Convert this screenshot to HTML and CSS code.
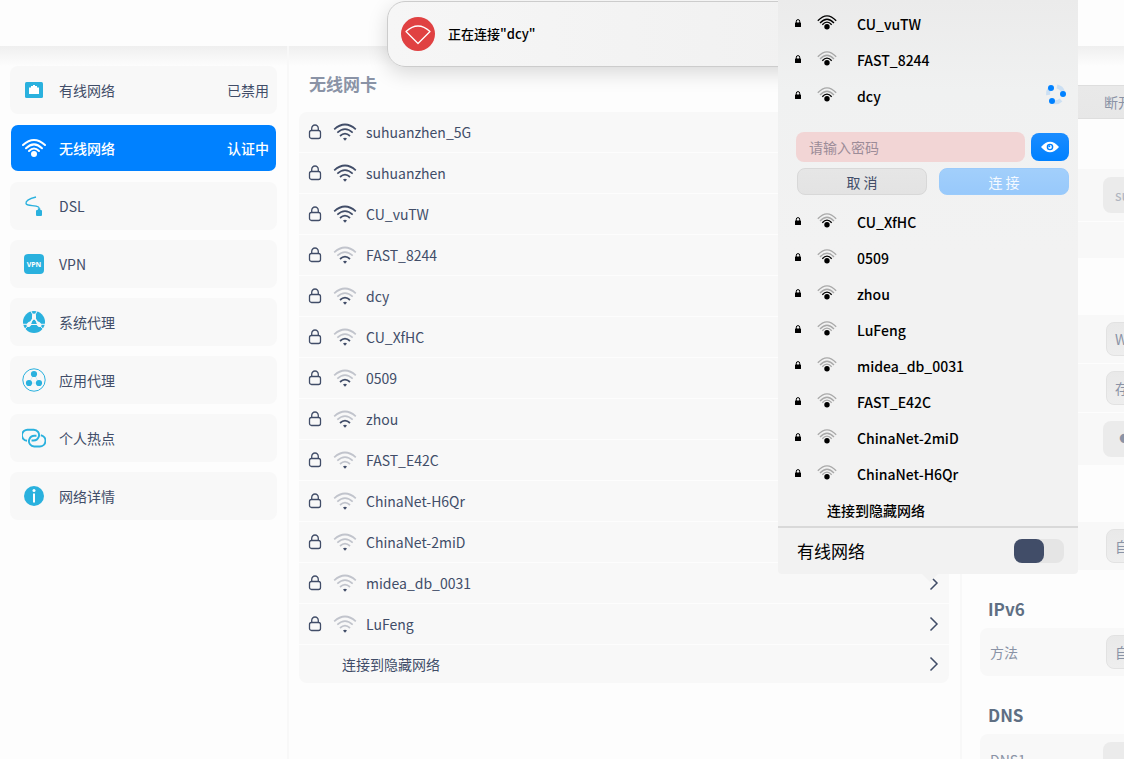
FILE: index.html
```html
<!DOCTYPE html>
<html lang="zh-CN">
<head>
    <meta charset="UTF-8">
    <meta name="viewport" content="width=device-width, initial-scale=1.0">
    <title>网络</title>
    <link rel="stylesheet" href="styles.css">
</head>
<body>
    <svg class="sprite" aria-hidden="true">
        <symbol id="lock" viewBox="0 0 14 16">
            <rect x="1.5" y="6.5" width="11" height="8" rx="2"/>
            <path d="M3.7 6.5V4.6a3.3 3.6 0 0 1 6.6 0v1.9"/>
        </symbol>
        <symbol id="lock-small" viewBox="0 0 6 8">
            <rect x="0" y="3.5" width="6" height="4.5" rx=".6" fill="#000"/>
            <path d="M1.3 4V2.2a1.7 1.6 0 0 1 3.4 0V4" fill="none" stroke="#000"/>
        </symbol>
        <symbol id="wifi" viewBox="0 0 24 18">
            <path class="w3" d="M1.2 6.3Q12-3.3 22.8 6.3"/>
            <path class="w2" d="M4.3 9.7Q12 2.6 19.7 9.7"/>
            <path class="w1" d="M7 13Q12 8.4 17 13"/>
            <path class="dot" d="M10 15.600Q12 14 14 15.600L12 17.800z"/>
        </symbol>
        <symbol id="wifi-tray" viewBox="0 0 20 15">
            <path class="w3" d="M.8 5.8Q10-4.2 19.2 5.8"/>
            <path class="w2" d="M3 8Q10 .5 17 8"/>
            <path class="w1" d="M5.3 9.8Q10 4.4 14.7 9.8"/>
            <circle class="dot" cx="10" cy="11.7" r="2.7"/>
        </symbol>
        <symbol id="chevron" viewBox="0 0 10 16">
            <path d="M1.5 1.5 8 8l-6.500 6.500"/>
        </symbol>
    </svg>

    <header class="titlebar"></header>

    <div class="layout">
        <nav class="sidebar">
            <a href="#" class="nav-item">
                <svg class="nav-icon" viewBox="0 0 24 24"><rect x="3" y="4" width="18" height="16" rx="1.500" fill="#2ab1de"/><path d="M7 16V9.500h2V8h2V7h2v1h2v1.500h2V16z" fill="#fff"/></svg>
                <span>有线网络</span>
                <span class="nav-state">已禁用</span>
            </a>
            <a href="#" class="nav-item active">
                <svg class="nav-icon" viewBox="0 0 24 24"><g fill="none" stroke="#fff" stroke-width="2" stroke-linecap="round"><path d="M1 9Q12-1 23 9"/><path d="M4 12.3Q12 4.5 20 12.3"/><path d="M7 15Q12 10 17 15"/></g><circle cx="12" cy="18" r="3" fill="#fff"/></svg>
                <span>无线网络</span>
                <span class="nav-state">认证中</span>
            </a>
            <a href="#" class="nav-item">
                <svg class="nav-icon" viewBox="0 0 24 24"><path d="M14 3C8 4.500 3.500 7 4 9.500c.6 2.800 9 1.500 12.500 3.500.8.500.8 1.500.8 3" fill="none" stroke="#2ab1de" stroke-width="1.300"/><path d="M14 17q0-1 1-1h.8v-1.500h2.600V16h.6q1 0 1 1v4q0 1-1 1h-4q-1 0-1-1z" fill="#2ab1de"/></svg>
                <span>DSL</span>
            </a>
            <a href="#" class="nav-item">
                <svg class="nav-icon" viewBox="0 0 24 24"><rect x="2" y="2" width="20" height="20" rx="4" fill="#2ab1de"/><text class="vpn-text" x="12" y="15" text-anchor="middle">VPN</text></svg>
                <span>VPN</span>
            </a>
            <a href="#" class="nav-item">
                <svg class="nav-icon" viewBox="0 0 24 24"><circle cx="12" cy="12" r="11" fill="#2ab1de"/><g fill="none" stroke="#f8f8f8" stroke-linecap="round"><path d="M12 5.500v2.500M8 13.500l-1.500 1.500M16 13.500l1.500 1.500" stroke-width="4"/><path d="M12 7 7 15M12 7l5 8M7 14.300h10" stroke-width="1.600"/><path d="M9 1.200 11 5M15 1.200 13 5M.8 14.300H6M23.200 14.300H18M3.500 18.500 6 15.500M20.500 18.500 18 15.500" stroke-width="1"/></g><path d="M12 9.500l3 4.500H9z" fill="#2ab1de"/></svg>
                <span>系统代理</span>
            </a>
            <a href="#" class="nav-item">
                <svg class="nav-icon" viewBox="0 0 24 24"><circle cx="12" cy="12" r="11.200" fill="none" stroke="#2ab1de"/><path d="M12 6l5 9H7z" fill="none" stroke="#c5e8f4" stroke-width=".8"/><g fill="#2ab1de"><circle cx="12" cy="6" r="3.100"/><circle cx="7" cy="15" r="3.100"/><circle cx="17" cy="15" r="3.100"/></g></svg>
                <span>应用代理</span>
            </a>
            <a href="#" class="nav-item">
                <svg class="nav-icon" viewBox="0 0 24 24"><g fill="none" stroke="#2ab1de" stroke-width="1.900"><path d="M5 14.800A5.300 5.300 0 0 1 6 3.700h5.500a5.300 5.300 0 0 1 5.200 7.200 5.500 5.500 0 0 1-5.200 3.600H9.500"/><path d="M18.800 9.200a5.700 5.700 0 0 1-1.300 11.300h-5a5.300 5.300 0 0 1-5.200-7.200 5.500 5.500 0 0 1 5.200-3.600h2"/></g></svg>
                <span>个人热点</span>
            </a>
            <a href="#" class="nav-item">
                <svg class="nav-icon" viewBox="0 0 24 24"><circle cx="12" cy="12" r="10" fill="#2ab1de"/><circle cx="12" cy="6.500" r="1.500" fill="#fff"/><rect x="11" y="9.500" width="2" height="9" fill="#fff"/></svg>
                <span>网络详情</span>
            </a>
        </nav>

        <main class="wireless">
            <h2 class="adapter">无线网卡</h2>
            <div class="network-list" id="network-list"></div>
        </main>

        <aside class="details">
            <form class="details-form">
                <button type="button" class="disconnect">断开连接</button>
                <div class="card">
                    <div class="field tall"><input type="text" class="text-box" aria-label="SSID" value="suhuanzhen_5G" disabled></div>
                    <div class="field short"></div>
                </div>
                <div class="card spaced">
                    <div class="field"><select class="drop" aria-label="安全"><option>WPA/WPA2 个人版</option></select></div>
                    <div class="field"><select class="drop" aria-label="密码选项"><option>存储密码</option></select></div>
                    <div class="field tall"><input type="password" class="text-box secret" aria-label="密码" value="12345678"></div>
                </div>
                <div class="card spaced">
                    <div class="field"><select class="drop" aria-label="IPv4 方法"><option>自动</option></select></div>
                </div>
                <h3>IPv6</h3>
                <div class="card">
                    <div class="field"><label for="ipv6">方法</label><select class="drop" id="ipv6"><option>自动</option></select></div>
                </div>
                <h3>DNS</h3>
                <div class="card">
                    <div class="field tall"><label for="dns1">DNS1</label><input type="text" class="text-box" id="dns1"></div>
                </div>
            </form>
        </aside>
    </div>

    <div class="notification" role="status">
        <svg class="notification-icon" viewBox="0 0 34 34"><circle cx="17" cy="17" r="17" fill="#e04142"/><path d="M5 14.500Q17 3.500 29 14.500L17 26.500z" fill="none" stroke="#fff" stroke-width="1.300" stroke-linejoin="round"/></svg>
        <span>正在连接"dcy"</span>
    </div>

    <section class="tray">
        <div id="tray-top"></div>
        <form class="password-form">
            <input type="password" class="password" placeholder="请输入密码" aria-label="密码">
            <button type="button" class="reveal" aria-label="显示密码">
                <svg viewBox="0 0 18 12"><path d="M0 6Q9-4.500 18 6 9 16.500 0 6z" fill="#fff"/><circle cx="9" cy="6" r="3.300" fill="#0081ff"/><circle cx="9" cy="6" r="1.900" fill="#fff"/><circle cx="8.300" cy="5.300" r="1" fill="#0081ff"/></svg>
            </button>
            <div class="buttons">
                <button type="button" class="cancel">取 消</button>
                <button type="submit" class="connect" disabled>连 接</button>
            </div>
        </form>
        <div id="tray-bottom"></div>
        <a href="#" class="tray-hidden">连接到隐藏网络</a>
        <div class="tray-wired">
            <label for="wired">有线网络</label>
            <input type="checkbox" class="switch" id="wired">
        </div>
    </section>

    <script src="script.js"></script>
</body>
</html>
```
FILE: script.js
```js
// name and signal strength (0-3)
const networks = [
    ['suhuanzhen_5G', 3], ['suhuanzhen', 3], ['CU_vuTW', 3],
    ['FAST_8244', 1], ['dcy', 1], ['CU_XfHC', 1], ['0509', 1], ['zhou', 1],
    ['FAST_E42C', 0], ['ChinaNet-H6Qr', 0], ['ChinaNet-2miD', 0],
    ['midea_db_0031', 0], ['LuFeng', 0]
];
const trayTop = [['CU_vuTW', 3], ['FAST_8244', 1], ['dcy', 1]];
const trayBottom = [
    ['CU_XfHC', 1], ['0509', 1], ['zhou', 1], ['LuFeng', 0], ['midea_db_0031', 0],
    ['FAST_E42C', 0], ['ChinaNet-2miD', 0], ['ChinaNet-H6Qr', 0]
];

// an inline copy of a symbol, so that the bars can be styled one by one
function icon(id, cls) {
    const s = document.getElementById(id);
    return `<svg class="${cls}" viewBox="${s.getAttribute('viewBox')}">${s.innerHTML}</svg>`;
}

function trayRow([name, level]) {
    const busy = name === 'dcy' ? '<span class="spinner"><svg viewBox="0 0 22 22">' +
        '<g fill="none" stroke="#0081ff" stroke-width="4" opacity=".15">' +
        '<path d="M12 3.500A8 8 0 0 1 18 9"/><path d="M3 12A8 8 0 0 1 4.500 6"/><path d="M16 17A8 8 0 0 1 9 19"/></g>' +
        '<g fill="#0081ff"><circle cx="6" cy="5" r="3"/><circle cx="18" cy="11" r="3"/><circle cx="7" cy="18" r="3"/></g></svg></span>' : '';
    return `<a href="#" class="tray-row">${icon('lock-small', 'tray-lock')}${icon('wifi-tray', 'tray-wifi level-' + level)}<span>${name}</span>${busy}</a>`;
}

document.getElementById('network-list').innerHTML = networks.map(([name, level]) =>
    `<a href="#" class="network">${icon('lock', 'lock')}${icon('wifi', 'wifi level-' + level)}<span>${name}</span>${icon('chevron', 'chevron')}</a>`
).join('') + `<a href="#" class="network hidden-network"><span>连接到隐藏网络</span>${icon('chevron', 'chevron')}</a>`;
document.getElementById('tray-top').innerHTML = trayTop.map(trayRow).join('');
document.getElementById('tray-bottom').innerHTML = trayBottom.map(trayRow).join('');
```
FILE: styles.css
```css
* {
    box-sizing: border-box;
}
html, body {
    height: 100%;
}
body {
    display: flex;
    flex-direction: column;
    position: relative;
    margin: 0;
    overflow: hidden;
    background: #fdfdfd;
    color: #414d68;
    font: 14px/20px "Noto Sans CJK SC", sans-serif;
}
a {
    color: inherit;
    text-decoration: none;
}
button, input, select {
    font: inherit;
}
h2, h3 {
    margin: 0;
    font-size: 17px;
    line-height: 24px;
}
.sprite {
    display: none;
}
.titlebar {
    height: 46px;
    flex: none;
}
.layout {
    flex: 1;
    min-height: 0;
    display: grid;
    grid-template-columns: 289px minmax(0, 1fr) 164px;
    background: linear-gradient(#efefef, #fdfdfd 20px);
}

/* left menu */
.sidebar {
    display: flex;
    flex-direction: column;
    gap: 10px;
    padding: 20px 10px 0;
    border-right: 2px solid #f8f8f8;
}
.nav-item {
    display: flex;
    align-items: center;
    gap: 13px;
    height: 48px;
    padding: 0 8px 0 12px;
    background: #f8f8f8;
    border-radius: 8px;
}
.nav-item.active {
    background: #0081ff;
    background-clip: padding-box;
    border: 1px solid transparent;
    padding: 0 7px 0 11px;
    color: #fff;
    font-weight: 500;
}
.nav-icon {
    width: 24px;
    height: 24px;
}
.nav-state {
    margin-left: auto;
}
.vpn-text {
    font: 700 7px "Noto Sans", sans-serif;
    fill: #fff;
}

/* list of networks */
.wireless {
    padding: 26px 11px 0 10px;
}
.adapter {
    padding-left: 10px;
    color: #8a93a6;
}
.network-list {
    margin-top: 16px;
    border-radius: 8px;
    overflow: hidden;
}
.network {
    display: flex;
    align-items: center;
    height: 40px;
    padding: 0 10px 0 9px;
    margin-bottom: 1px;
    background: #f8f8f8;
}
.network.hidden-network {
    height: 38px;
    margin: 0;
    padding-left: 43px;
}
.lock, .chevron {
    fill: none;
    stroke: #414d68;
    stroke-width: 1.3;
}
.lock {
    width: 14px;
    height: 16px;
}
.chevron {
    width: 10px;
    height: 16px;
    margin-left: auto;
    stroke-width: 1.5;
}
.wifi {
    width: 24px;
    height: 18px;
    margin: 0 9px 0 11px;
    fill: none;
    stroke: #414d68;
    stroke-width: 1.7;
}
.wifi .dot {
    fill: #414d68;
    stroke: none;
}
.level-1 .w2, .level-1 .w3,
.level-0 .w1, .level-0 .w2, .level-0 .w3 {
    opacity: .3;
}

/* connection details */
.details {
    overflow: hidden;
    border-left: 2px solid #f8f8f8;
    padding: 39px 0 0 18px;
    color: #8a93a6;
}
.details-form {
    width: 320px;
}
.details h3 {
    padding: 0 8px;
    margin: 27px 0 7px;
    color: #5f6f83;
}
.disconnect {
    display: block;
    width: 100%;
    height: 34px;
    margin-bottom: 50px;
    padding: 0 0 0 123px;
    text-align: left;
    background: linear-gradient(#e9e9e9, #e7e7e7);
    border: 1px solid #dedede;
    color: #8a93a6;
}
.card {
    border-radius: 8px;
    overflow: hidden;
}
.card.spaced {
    margin-top: 57px;
}
.field {
    display: flex;
    align-items: center;
    height: 48px;
    padding-left: 10px;
    background: #f8f8f8;
}
.field + .field {
    margin-top: 1px;
}
.field.tall {
    height: 52px;
}
.field.short {
    height: 36px;
}
.drop, .text-box {
    width: 194px;
    height: 34px;
    margin-left: auto;
    padding: 0 8px;
    appearance: none;
    background: linear-gradient(#e9e9e9, #eee);
    border: 1px solid #e2e2e2;
    border-radius: 8px;
    color: #8a93a6;
}
.text-box {
    width: 197px;
    height: 36px;
    padding: 0 12px;
    background: #ebebeb;
    border: 0;
}
.text-box:disabled {
    color: #b0b5c0;
}
.secret {
    font-family: "DejaVu Sans", sans-serif;
    font-size: 32px;
}

/* notification bubble */
.notification {
    position: absolute;
    top: 1px;
    left: 387px;
    right: 90px;
    display: flex;
    align-items: center;
    gap: 13px;
    height: 66px;
    padding-left: 13px;
    background: linear-gradient(90deg, #f6f6f6, #eee);
    border: 1px solid #ccc;
    border-radius: 18px;
    box-shadow: 0 6px 20px rgba(0, 0, 0, .15);
    color: #000;
    font-size: 13px;
    font-weight: 500;
}
.notification-icon {
    width: 34px;
    height: 34px;
}

/* tray popup */
.tray {
    position: absolute;
    top: 0;
    right: 46px;
    width: 300px;
    padding-top: 6px;
    background: linear-gradient(#ebebeb, #f0f1f1 90px, #f2f2f2 250px);
    border-radius: 0 0 4px 4px;
    color: #000;
}
.tray::after {
    content: "";
    position: absolute;
    top: 100%;
    left: 144px;
    border: 8px solid transparent;
    border-top-color: #f2f2f2;
    border-bottom: 0;
}
.tray-row, .tray-hidden {
    font-weight: 500;
}
.tray-row {
    display: flex;
    align-items: center;
    height: 36px;
    padding: 0 11px 0 17px;
}
.tray-lock {
    width: 6px;
    height: 8px;
    margin-bottom: 3px;
}
.tray-wifi {
    width: 20px;
    height: 15px;
    margin: 0 20px 3px 16px;
    fill: none;
    stroke: #000;
    stroke-width: 1.3;
}
.tray-wifi .dot {
    fill: #000;
    stroke: none;
}
.spinner {
    width: 22px;
    height: 22px;
    margin: 0 0 4px auto;
}
.spinner svg {
    display: block;
}
.password-form {
    display: flex;
    flex-wrap: wrap;
    gap: 6px;
    padding: 18px 9px 9px 18px;
}
.password {
    flex: 1;
    min-width: 0;
    height: 30px;
    padding: 0 13px;
    background: #f2d5d5;
    border: 0;
    border-radius: 8px;
}
.password::placeholder {
    color: #9c8c98;
}
.reveal {
    width: 38px;
    height: 28px;
    align-self: center;
    padding: 0;
    background: linear-gradient(#1a8cff, #0081ff);
    border: 0;
    border-radius: 8px;
}
.reveal svg {
    display: block;
    width: 18px;
    margin: 0 auto;
}
.buttons {
    width: 100%;
    display: flex;
    gap: 12px;
    padding-left: 1px;
}
.buttons button {
    flex: 1 1 0;
    height: 27px;
    padding: 0;
    border-radius: 8px;
}
.cancel {
    background: linear-gradient(#e6e6e6, #e3e3e3);
    border: 1px solid #d8d8d8;
    color: #414d68;
}
.buttons .connect {
    background: linear-gradient(#a2cffb, #98c9fb);
    border: 1px solid #9bcbfb;
    color: #f4f9ff;
}
.tray-hidden {
    display: block;
    padding: 8px 49px 6px;
}
.tray-wired {
    display: flex;
    align-items: center;
    justify-content: space-between;
    height: 48px;
    padding: 0 14px 0 19px;
    border-top: 2px solid #d9d9d9;
    font-size: 17px;
}
.switch {
    appearance: none;
    width: 50px;
    height: 24px;
    margin: 0;
    background: #e5e5e5;
    border-radius: 8px;
}
.switch::before {
    content: "";
    display: block;
    width: 30px;
    height: 24px;
    background: #414d68;
    border-radius: 8px;
}
```
